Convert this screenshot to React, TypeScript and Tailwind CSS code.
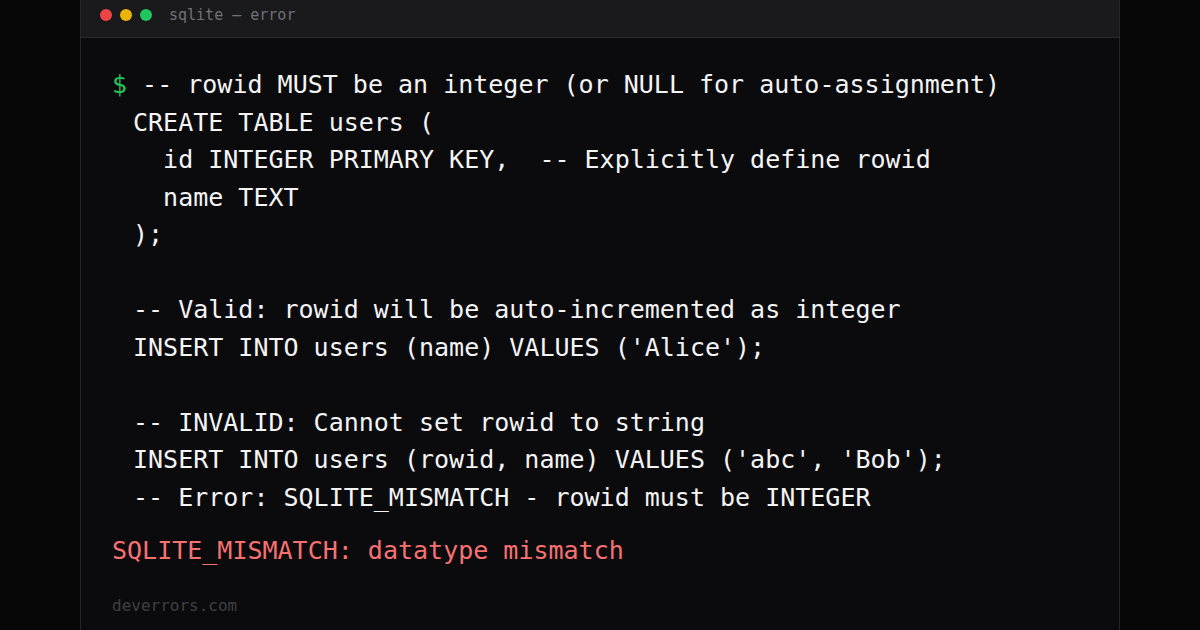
const codeLines = [
  'CREATE TABLE users (',
  '  id INTEGER PRIMARY KEY,  -- Explicitly define rowid',
  '  name TEXT',
  ');',
  '',
  '-- Valid: rowid will be auto-incremented as integer',
  "INSERT INTO users (name) VALUES ('Alice');",
  '',
  '-- INVALID: Cannot set rowid to string',
  "INSERT INTO users (rowid, name) VALUES ('abc', 'Bob');",
  '-- Error: SQLITE_MISMATCH - rowid must be INTEGER',
];

export default function App() {
  return (
    <div
      className="w-[1200px] h-[630px] overflow-hidden bg-[#070708] flex items-center justify-center"
      style={{ fontFamily: '"DejaVu Sans Mono", "Liberation Mono", monospace' }}
    >
      <div className="w-[1040px] h-[646px] shrink-0 flex flex-col rounded-lg border border-[#26262a] bg-[#0b0b0d] overflow-hidden">
        <div className="flex items-center gap-2 pl-[19px] pr-5 py-3 bg-[#1a1a1d] border-b border-[#2a2a2e]">
          <span className="w-3 h-3 rounded-full bg-[#ef4444]" />
          <span className="w-3 h-3 rounded-full bg-[#eab308]" />
          <span className="w-3 h-3 rounded-full bg-[#22c55e]" />
          <span className="ml-[9px] text-[15px] leading-5 text-[#71717a]">sqlite — error</span>
        </div>
        <div className="flex-1 pl-[31px] pr-8 pt-7">
          <div className="text-[25px] leading-[37.5px] text-[#f4f4f5] whitespace-pre">
            <div>
              <span className="text-[#22c55e]">$</span> -- rowid MUST be an integer (or NULL for auto-assignment)
            </div>
            <div className="pl-[21px]">
              {codeLines.map((line, i) => (
                <div key={i} className="h-[37.5px]">
                  {line}
                </div>
              ))}
            </div>
          </div>
          <div className="mt-4 text-[25px] leading-[37.5px] text-[#f87171]">
            SQLITE_MISMATCH: datatype mismatch
          </div>
          <div className="mt-6 text-base leading-6 text-[#3f3f46]">deverrors.com</div>
        </div>
      </div>
    </div>
  );
}
